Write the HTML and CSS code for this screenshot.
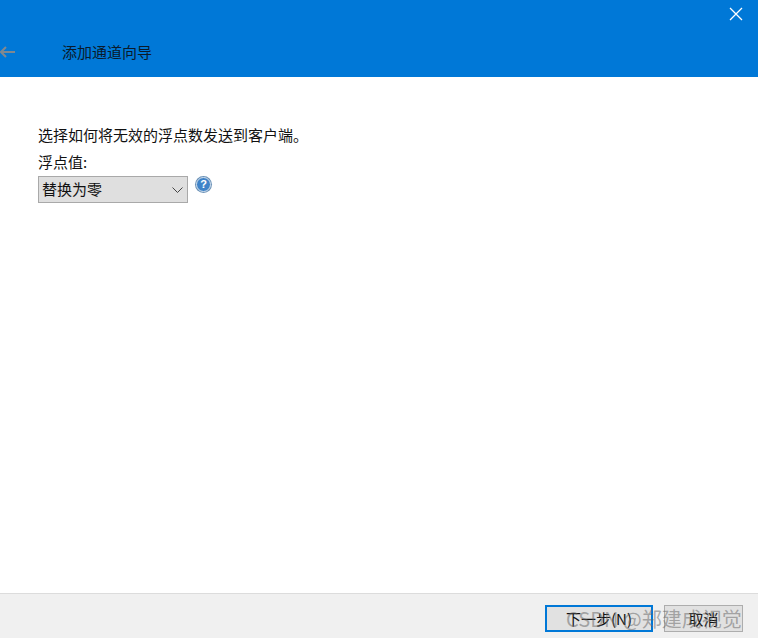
FILE: index.html

```html
<!DOCTYPE html>
<html lang="zh-CN">
<head>
  <meta charset="UTF-8" />
  <title>添加通道向导</title>
  <link rel="stylesheet" href="styles.css">
</head>
<body>

<div class="wizard">
  <header class="header">
    <div class="close-row">
      <svg class="close-icon" width="14" height="14" viewBox="0 0 14 14">
        <path d="M1 1L13 13M13 1L1 13" stroke="#fff" stroke-width="1.3" fill="none"/>
      </svg>
    </div>
    <div class="title-row">
      <svg class="back-icon" width="16" height="12" viewBox="0 0 16 12">
        <path d="M15 6H1M6 1L1 6L6 11" stroke="#808890" stroke-width="2" fill="none"/>
      </svg>
      <span class="title">添加通道向导</span>
    </div>
  </header>

  <main class="content">
    <p class="intro">选择如何将无效的浮点数发送到客户端。</p>
    <label class="field-label">浮点值:</label>
    <div class="field-row">
      <div class="select">
        <span class="select-text">替换为零</span>
        <svg width="11" height="6" viewBox="0 0 11 6">
          <path d="M0.5 0.5L5.5 5.5L10.5 0.5" stroke="#444" stroke-width="1" fill="none"/>
        </svg>
      </div>
      <div class="help">?</div>
    </div>
  </main>

  <footer class="footer">
    <button class="btn btn-primary">下一步(N)</button>
    <button class="btn">取消</button>
  </footer>
</div>

<div class="watermark">CSDN @郑建成视觉</div>

</body>
</html>
```

FILE: styles.css

```css
* { box-sizing: border-box; margin: 0; padding: 0; }

html, body {
  width: 758px;
  height: 638px;
  overflow: hidden;
  background: #fff;
  font-family: "Noto Sans CJK SC", "Liberation Sans", sans-serif;
  font-size: 15px;
  color: #111;
}

.wizard {
  display: flex;
  flex-direction: column;
  height: 638px;
}

.header {
  height: 77px;
  background: #0078d7;
  flex-shrink: 0;
}

.close-row {
  display: flex;
  justify-content: flex-end;
  padding: 7px 15px 0 0;
  height: 37px;
}

.title-row {
  display: flex;
  align-items: center;
  height: 29px;
}

.back-icon {
  margin-right: 46px;
}

.title {
  color: #0b1a2a;
  font-size: 15px;
  line-height: 29px;
}

.content {
  flex: 1;
  padding: 47px 38px 0;
}

.intro {
  line-height: 22px;
  margin-bottom: 6px;
}

.field-label {
  display: block;
  line-height: 20px;
}

.field-row {
  display: flex;
  align-items: flex-start;
  gap: 7px;
  margin-top: 4px;
}

.select {
  width: 150px;
  height: 27px;
  background: #dfdfdf;
  border: 1px solid #a9a9a9;
  display: flex;
  align-items: center;
  justify-content: space-between;
  padding: 0 4px 0 3px;
}

.select-text {
  line-height: 23px;
  margin-bottom: 2px;
}

.help {
  width: 15px;
  height: 15px;
  margin: 1px 0 0 1px;
  border-radius: 50%;
  border: 1px solid #d5e2ef;
  background: #3f83c8;
  box-shadow: 0 0 0 1px #6d93b8;
  color: #fff;
  font: bold 11px/13px "Liberation Sans", sans-serif;
  text-align: center;
}

.footer {
  height: 45px;
  flex-shrink: 0;
  background: #f0f0f0;
  border-top: 1px solid #dcdcdc;
  display: flex;
  justify-content: flex-end;
  gap: 11px;
  padding: 11px 15px 0 0;
}

.btn {
  width: 79px;
  height: 27px;
  background: #e1e1e1;
  border: 1px solid #adadad;
  font: inherit;
  color: #111;
}

.btn-primary {
  width: 108px;
  border: 2px solid #0078d7;
}

.watermark {
  position: absolute;
  left: 566px;
  top: 605px;
  font-size: 20px;
  line-height: 28px;
  color: rgba(100, 100, 100, 0.5);
  white-space: nowrap;
}
```
